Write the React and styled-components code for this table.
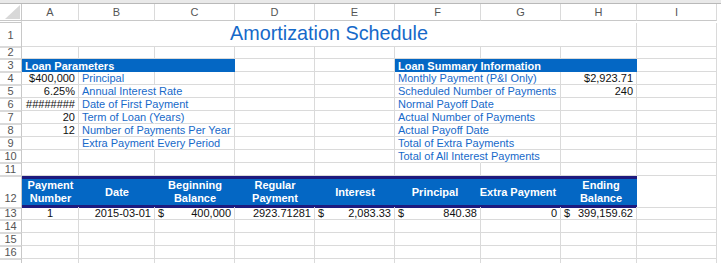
import React from "react";
import styled, { createGlobalStyle } from "styled-components";

const GlobalStyle = createGlobalStyle`
  html, body {
    margin: 0;
    padding: 0;
    background: #ffffff;
    overflow: hidden;
  }
  body {
    font-family: "Liberation Sans", Arial, sans-serif;
  }
`;

const COLS = "22px 57px 76px 80px 80px 80px 86px 80px 76px 80px";
const GRID = "#dadada";
const BLUE = "#0467c4";
const NAVY = "#1e1a7e";
const LINK = "#1769c9";

const Sheet = styled.div`
  width: 721px;
  height: 263px;
  overflow: hidden;
  font-size: 11px;
  color: #111;
`;

const TopEdge = styled.div`
  height: 3px;
  background: #e9e9e9;
  border-bottom: 1px solid #b9b9b9;
`;

const Row = styled.div`
  display: grid;
  grid-template-columns: ${COLS};
  height: ${(p) => p.$h || 13}px;
`;

const Corner = styled.div`
  border-right: 1px solid #c8c8c8;
  border-bottom: 1px solid #c8c8c8;
  display: flex;
  align-items: flex-end;
  justify-content: flex-end;
  padding: 0 1px 1px 0;
`;

const ColHead = styled.div`
  border-right: 1px solid ${GRID};
  border-bottom: 1px solid #c8c8c8;
  color: #555;
  display: flex;
  align-items: center;
  justify-content: center;
  font-size: 11px;
`;

const RowHead = styled.div`
  border-right: 1px solid #c8c8c8;
  border-bottom: 1px solid ${GRID};
  color: #555;
  display: flex;
  align-items: ${(p) => (p.$bottom ? "flex-end" : "center")};
  justify-content: center;
  padding-bottom: ${(p) => (p.$bottom ? "3px" : "0")};
  box-sizing: border-box;
`;

const Cell = styled.div`
  grid-column: span ${(p) => p.$span || 1};
  box-sizing: border-box;
  border-right: 1px solid ${(p) => (p.$open ? "transparent" : GRID)};
  border-bottom: 1px solid ${GRID};
  padding: 0 3px;
  display: flex;
  align-items: center;
  justify-content: ${(p) =>
    p.$align === "right" ? "flex-end" : p.$align === "center" ? "center" : "flex-start"};
  white-space: nowrap;
  overflow: visible;
  color: ${(p) => (p.$link ? LINK : "#111")};
  line-height: 12px;
`;

const Money = styled(Cell)`
  justify-content: space-between;
`;

const Title = styled(Cell)`
  justify-content: center;
  align-items: flex-end;
  padding-bottom: 3px;
  font-size: 19.8px;
  line-height: 20px;
  color: #1569c9;
`;

const Bar = styled.div`
  grid-column: span ${(p) => p.$span || 1};
  background: ${BLUE};
  color: #fff;
  font-weight: bold;
  display: flex;
  align-items: center;
  padding: 0 3px;
  white-space: nowrap;
`;

const HeaderBand = styled.div`
  grid-column: span 8;
  display: grid;
  grid-template-columns: 57px 76px 80px 80px 80px 80px 86px 80px;
  background: ${BLUE};
  border-top: 3px solid ${NAVY};
  border-bottom: 3px solid ${NAVY};
  box-sizing: border-box;
`;

const HeadCell = styled.div`
  color: #fff;
  font-weight: bold;
  text-align: center;
  display: flex;
  align-items: center;
  justify-content: center;
  line-height: 13px;
  white-space: pre-line;
`;

const letters = ["A", "B", "C", "D", "E", "F", "G", "H", "I", ""];

function Blank({ n = 1, open }) {
  return Array.from({ length: n }, (_, i) => <Cell key={i} $open={open} />);
}

function CornerMark() {
  return (
    <svg width="15" height="14" viewBox="0 0 15 14">
      <polygon points="15,0 15,14 0,14" fill="#d8d8d8" />
    </svg>
  );
}

export default function App() {
  const leftParams = [
    ["$400,000", "Principal", false],
    ["6.25%", "Annual Interest Rate", true],
    ["########", "Date of First Payment", true],
    ["20", "Term of Loan (Years)", true],
    ["12", "Number of Payments Per Year", true],
    ["", "Extra Payment Every Period", true],
    ["", "", false],
  ];
  const summary = [
    ["Monthly Payment (P&I Only)", "$2,923.71"],
    ["Scheduled Number of Payments", "240"],
    ["Normal Payoff Date", ""],
    ["Actual Number of Payments", ""],
    ["Actual Payoff Date", ""],
    ["Total of Extra Payments", ""],
    ["Total of All Interest Payments", ""],
  ];
  const heads = [
    "Payment\nNumber",
    "Date",
    "Beginning\nBalance",
    "Regular\nPayment",
    "Interest",
    "Principal",
    "Extra Payment",
    "Ending\nBalance",
  ];

  return (
    <>
      <GlobalStyle />
      <Sheet>
        <TopEdge />
        <Row $h={19}>
          <Corner>
            <CornerMark />
          </Corner>
          {letters.map((l, i) => (
            <ColHead key={i}>{l}</ColHead>
          ))}
        </Row>

        <Row $h={23}>
          <RowHead>1</RowHead>
          <Title $span={8}>Amortization Schedule</Title>
          <Blank n={2} />
        </Row>

        <Row>
          <RowHead>2</RowHead>
          <Blank n={10} />
        </Row>

        <Row>
          <RowHead>3</RowHead>
          <Bar $span={3}>Loan Parameters</Bar>
          <Blank n={2} />
          <Bar $span={3}>Loan Summary Information</Bar>
          <Blank n={2} />
        </Row>

        {leftParams.map(([val, label, over], i) => (
          <Row key={i}>
            <RowHead>{i + 4}</RowHead>
            <Cell $align="right">{val}</Cell>
            <Cell $link $open={over}>
              {label}
            </Cell>
            <Blank n={3} />
            <Cell $link $open={!!summary[i][0]}>
              {summary[i][0]}
            </Cell>
            <Cell />
            <Cell $align="right">{summary[i][1]}</Cell>
            <Blank n={2} />
          </Row>
        ))}

        <Row>
          <RowHead>11</RowHead>
          <Blank n={10} />
        </Row>

        <Row $h={31}>
          <RowHead $bottom>12</RowHead>
          <HeaderBand>
            {heads.map((h) => (
              <HeadCell key={h}>{h}</HeadCell>
            ))}
          </HeaderBand>
          <Blank n={2} />
        </Row>

        <Row>
          <RowHead>13</RowHead>
          <Cell $align="center">1</Cell>
          <Cell $align="right">2015-03-01</Cell>
          <Money>
            <span>$</span>
            <span>400,000</span>
          </Money>
          <Cell $align="right">2923.71281</Cell>
          <Money>
            <span>$</span>
            <span>2,083.33</span>
          </Money>
          <Money>
            <span>$</span>
            <span>840.38</span>
          </Money>
          <Cell $align="right">0</Cell>
          <Money>
            <span>$</span>
            <span>399,159.62</span>
          </Money>
          <Blank n={2} />
        </Row>

        {[14, 15, 16].map((n) => (
          <Row key={n}>
            <RowHead>{n}</RowHead>
            <Blank n={10} />
          </Row>
        ))}
        <Row>
          <RowHead />
          <Blank n={10} />
        </Row>
      </Sheet>
    </>
  );
}
